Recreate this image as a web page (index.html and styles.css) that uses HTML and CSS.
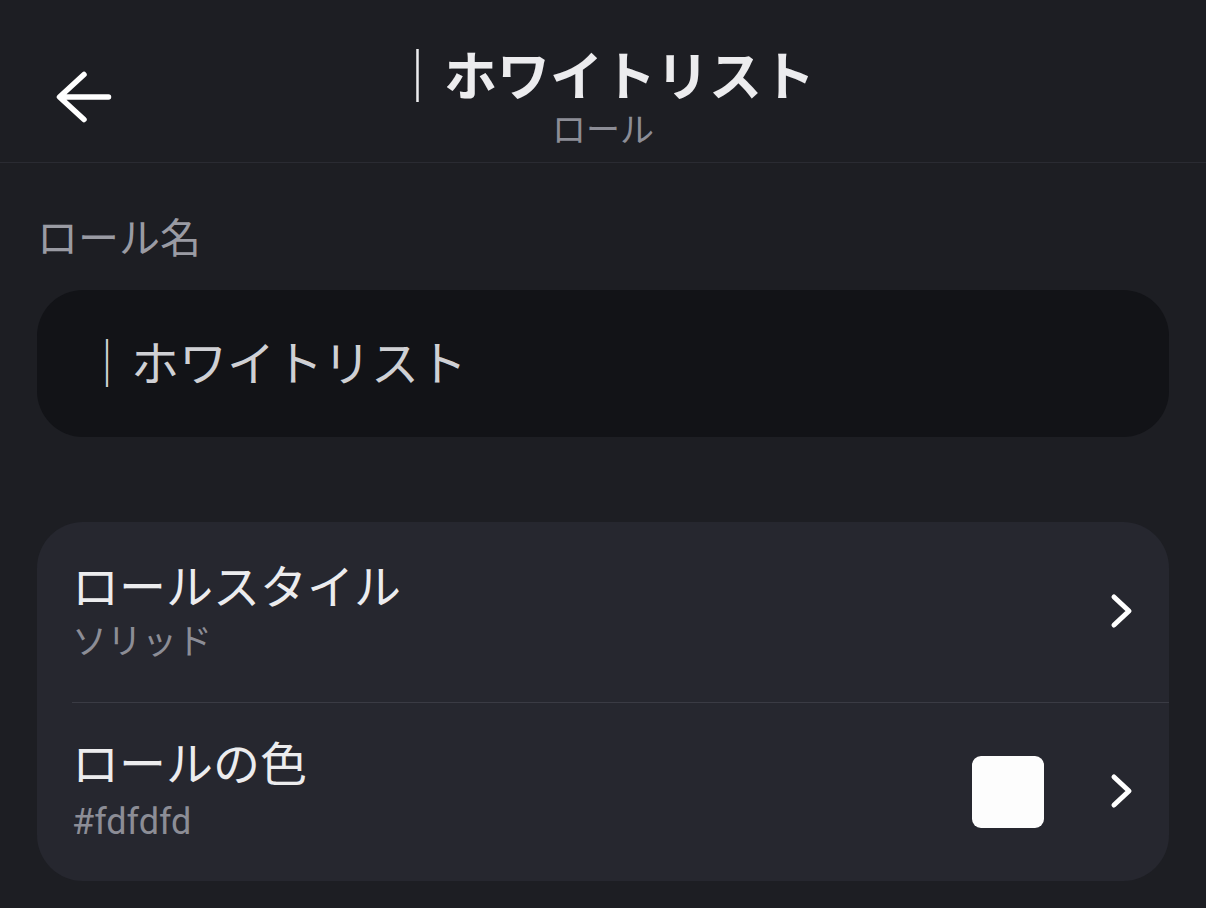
FILE: index.html
```html
<!DOCTYPE html>
<html lang="ja">
<head>
<meta charset="utf-8">
<link rel="stylesheet" href="styles.css">
</head>
<body>
<div class="screen">
  <header class="topbar">
    <button class="back" aria-label="戻る">
      <svg width="64" height="60" viewBox="0 0 64 60">
        <path d="M10 30H58.5M34 7.5L9.5 30L34 52.5" fill="none" stroke="#ffffff" stroke-width="5.5" stroke-linecap="round" stroke-linejoin="round"/>
      </svg>
    </button>
    <div class="titles">
      <div class="title">｜ホワイトリスト</div>
      <div class="subtitle">ロール</div>
    </div>
  </header>

  <main class="content">
    <div class="field-label">ロール名</div>
    <div class="input">｜ホワイトリスト</div>

    <div class="card">
      <div class="row">
        <div class="row-text">
          <div class="row-title">ロールスタイル</div>
          <div class="row-sub">ソリッド</div>
        </div>
        <svg class="chev" width="24" height="36" viewBox="0 0 24 36">
          <path d="M4 4L19 18L4 32" fill="none" stroke="#ffffff" stroke-width="5" stroke-linecap="round" stroke-linejoin="round"/>
        </svg>
      </div>
      <div class="row">
        <div class="row-text">
          <div class="row-title">ロールの色</div>
          <div class="row-sub latin">#fdfdfd</div>
        </div>
        <div class="swatch"></div>
        <svg class="chev" width="24" height="36" viewBox="0 0 24 36">
          <path d="M4 4L19 18L4 32" fill="none" stroke="#ffffff" stroke-width="5" stroke-linecap="round" stroke-linejoin="round"/>
        </svg>
      </div>
    </div>
  </main>
</div>
</body>
</html>
```
FILE: styles.css
```css
* { box-sizing: border-box; }
html, body {
  margin: 0;
  padding: 0;
  background: #1d1e23;
}
body {
  width: 1206px;
  height: 908px;
  overflow: hidden;
  font-family: "Noto Sans CJK JP", "Noto Sans", sans-serif;
}
.screen {
  display: flex;
  flex-direction: column;
  height: 908px;
}
.topbar {
  height: 163px;
  border-bottom: 1px solid #2a2b32;
  display: flex;
  align-items: flex-start;
  justify-content: center;
  position: relative;
}
.back {
  position: absolute;
  left: 50px;
  top: 67px;
  background: none;
  border: 0;
  padding: 0;
  width: 64px;
  height: 60px;
  display: flex;
}
.titles {
  display: flex;
  flex-direction: column;
  align-items: center;
  padding-top: 38px;
}
.title {
  font-size: 53px;
  font-weight: 700;
  line-height: 70px;
  color: #ececee;
}
.subtitle {
  font-size: 34px;
  line-height: 40px;
  color: #8c8d96;
}
.content {
  padding: 0 37px;
  display: flex;
  flex-direction: column;
}
.field-label {
  margin-top: 44px;
  font-size: 41px;
  line-height: 56px;
  color: #9a9ba3;
}
.input {
  margin-top: 27px;
  height: 147px;
  border-radius: 46px;
  background: #121317;
  color: #cfd0d4;
  font-size: 48px;
  padding-left: 46px;
  padding-bottom: 8px;
  display: flex;
  align-items: center;
}
.card {
  margin-top: 85px;
  background: #26272f;
  border-radius: 46px;
  display: flex;
  flex-direction: column;
}
.row {
  height: 180px;
  margin-left: 35px;
  padding-right: 35px;
  display: flex;
  align-items: center;
}
.row + .row {
  border-top: 1px solid #3a3b44;
  height: 179px;
}
.row-text {
  flex: 1;
  display: flex;
  flex-direction: column;
  padding-bottom: 6px;
}
.row-title {
  font-size: 47px;
  line-height: 54px;
  color: #ececee;
}
.row-sub {
  font-size: 35px;
  line-height: 44px;
  margin-top: 6px;
  color: #8c8d96;
}
.row-sub.latin {
  font-family: Roboto, "Noto Sans", sans-serif;
  font-size: 36px;
  margin-top: 12px;
}
.swatch {
  width: 72px;
  height: 72px;
  border-radius: 9px;
  background: #fdfdfd;
  margin-right: 66px;
}
.chev {
  display: block;
  margin-top: -2px;
}
```
